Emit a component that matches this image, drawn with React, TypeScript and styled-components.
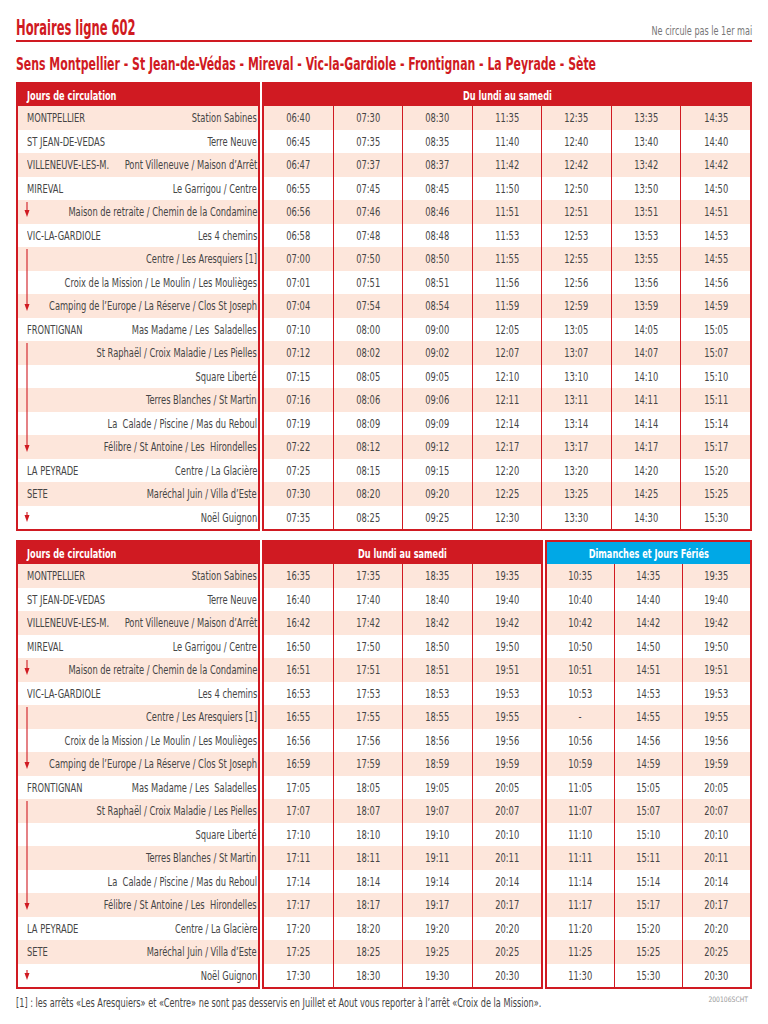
import React from "react";
import styled, { createGlobalStyle } from "styled-components";

const RED = "#d01a22";
const PINK = "#fde6db";
const BLUE = "#00a8e6";
const TEXT = "#454545";
const FONT = `"DejaVu Sans Condensed", "DejaVu Sans", "Liberation Sans", sans-serif`;

const Global = createGlobalStyle`
  html, body { margin: 0; padding: 0; background: #fff; }
  body { font-family: ${FONT}; font-stretch: condensed; color: ${TEXT}; }
`;

/* Condensed lettering: the page's face is a narrow condensed sans,
   so the installed condensed face is narrowed further horizontally. */
const Cond = styled.span<{ $o?: "left" | "right" | "center"; $k?: number }>`
  display: inline-block;
  white-space: nowrap;
  transform: scaleX(${(p) => p.$k ?? 0.74});
  transform-origin: ${(p) => p.$o ?? "left"} center;
`;

const Page = styled.div`
  width: 768px;
  box-sizing: border-box;
  padding: 0 16px;
  display: flex;
  flex-direction: column;
  overflow: hidden;
  & > * { flex: none; }
`;

const TitleRow = styled.header`
  height: 42px;
  box-sizing: border-box;
  display: flex;
  align-items: baseline;
  justify-content: space-between;
  border-bottom: 2px solid ${RED};
  padding-top: 16px;
`;

const Title = styled.h1`
  margin: 0;
  font-size: 21px;
  line-height: 24px;
  font-weight: 700;
  color: ${RED};
`;

const Note = styled.span`
  font-size: 12px;
  line-height: 12px;
  color: #777;
`;

const Subtitle = styled.h2`
  margin: 11px 0 0;
  font-size: 18px;
  line-height: 22px;
  font-weight: 700;
  color: ${RED};
  overflow: hidden;
`;

const Table = styled.section<{ $top: number }>`
  margin-top: ${(p) => p.$top}px;
  display: flex;
  gap: 2px;
`;

const Block = styled.div<{ $w: number }>`
  width: ${(p) => p.$w}px;
  flex: none;
  box-sizing: border-box;
  border: 2px solid ${RED};
  display: flex;
  flex-direction: column;
`;

const Head = styled.div<{ $blue?: boolean; $center?: boolean }>`
  height: 22px;
  display: flex;
  align-items: center;
  justify-content: ${(p) => (p.$center ? "center" : "flex-start")};
  padding: 0 9px;
  background: ${(p) => (p.$blue ? BLUE : RED)};
  color: #fff;
  font-weight: 700;
  font-size: 13px;
`;

const Row = styled.div<{ $odd: boolean }>`
  height: 23.5px;
  display: flex;
  align-items: center;
  background: ${(p) => (p.$odd ? PINK : "#fff")};
  font-size: 12.5px;
  white-space: nowrap;
`;

const Town = styled.span`
  position: relative;
  align-self: stretch;
  display: flex;
  align-items: center;
  padding-left: 9px;
  flex: none;
  min-width: 14px;
`;

const StopName = styled.span`
  flex: 1;
  min-width: 0;
  display: flex;
  justify-content: flex-end;
  padding-right: 1px;
`;

const Time = styled.span`
  flex: 1;
  align-self: stretch;
  display: flex;
  align-items: center;
  justify-content: center;
  & + & { border-left: 1px solid ${RED}; }
`;

const ArrowSvg = styled.svg`
  position: absolute;
  left: 5px;
  top: 0;
  width: 8px;
  height: 23.5px;
`;

type ArrowKind = "single" | "start" | "mid" | "end" | "short";

const Arrow = ({ kind }: { kind: ArrowKind }) => {
  const line: Record<ArrowKind, [number, number]> = {
    single: [2, 11],
    start: [2, 24],
    mid: [0, 24],
    end: [0, 11],
    short: [6, 10],
  };
  const [y1, y2] = line[kind];
  const hasHead = kind === "single" || kind === "end" || kind === "short";
  const hy = kind === "short" ? 9 : 10;
  return (
    <ArrowSvg viewBox="0 0 8 23.5">
      <line x1="4" y1={y1} x2="4" y2={y2} stroke={RED} strokeWidth="1.1" />
      {hasHead && <polygon points={`1.5,${hy} 6.5,${hy} 4,${hy + 7}`} fill={RED} />}
    </ArrowSvg>
  );
};

type StopInfo = { town?: string; stop: string; arrow?: ArrowKind; skip?: boolean };

const STOPS: StopInfo[] = [
  { town: "MONTPELLIER", stop: "Station Sabines" },
  { town: "ST JEAN-DE-VEDAS", stop: "Terre Neuve" },
  { town: "VILLENEUVE-LES-M.", stop: "Pont Villeneuve / Maison d\u2019Arrêt" },
  { town: "MIREVAL", stop: "Le Garrigou / Centre" },
  { arrow: "single", stop: "Maison de retraite / Chemin de la Condamine" },
  { town: "VIC-LA-GARDIOLE", stop: "Les 4 chemins" },
  { arrow: "start", stop: "Centre / Les Aresquiers [1]", skip: true },
  { arrow: "mid", stop: "Croix de la Mission / Le Moulin / Les Moulièges" },
  { arrow: "end", stop: "Camping de l\u2019Europe / La Réserve / Clos St Joseph" },
  { town: "FRONTIGNAN", stop: "Mas Madame / Les  Saladelles" },
  { arrow: "start", stop: "St Raphaël / Croix Maladie / Les Pielles" },
  { arrow: "mid", stop: "Square Liberté" },
  { arrow: "mid", stop: "Terres Blanches / St Martin" },
  { arrow: "mid", stop: "La  Calade / Piscine / Mas du Reboul" },
  { arrow: "end", stop: "Félibre / St Antoine / Les  Hirondelles" },
  { town: "LA PEYRADE", stop: "Centre / La Glacière" },
  { town: "SETE", stop: "Maréchal Juin / Villa d\u2019Este" },
  { arrow: "short", stop: "Noël Guignon" },
];

const OFFSETS = [0, 5, 7, 15, 16, 18, 20, 21, 24, 30, 32, 35, 36, 39, 42, 45, 50, 55];

const fmt = (base: string, off: number) => {
  const [h, m] = base.split(":").map(Number);
  const t = h * 60 + m + off;
  const hh = String(Math.floor(t / 60)).padStart(2, "0");
  const mm = String(t % 60).padStart(2, "0");
  return `${hh}:${mm}`;
};

const StopsBlock = () => (
  <Block $w={244}>
    <Head>
      <Cond $k={0.7}>Jours de circulation</Cond>
    </Head>
    {STOPS.map((s, i) => (
      <Row key={i} $odd={i % 2 === 0}>
        <Town>{s.arrow ? <Arrow kind={s.arrow} /> : <Cond>{s.town}</Cond>}</Town>
        <StopName>
          <Cond $o="right">{s.stop.replace(/  /g, "\u00a0 ")}</Cond>
        </StopName>
      </Row>
    ))}
  </Block>
);

const TimesBlock = ({
  w,
  label,
  bases,
  blue,
  holiday,
}: {
  w: number;
  label: string;
  bases: string[];
  blue?: boolean;
  holiday?: boolean;
}) => (
  <Block $w={w}>
    <Head $center $blue={blue}>
      <Cond $o="center" $k={0.7}>
        {label}
      </Cond>
    </Head>
    {OFFSETS.map((off, i) => (
      <Row key={i} $odd={i % 2 === 0}>
        {bases.map((b, j) => (
          <Time key={j}>
            <Cond $o="center">{holiday && j === 0 && STOPS[i].skip ? "-" : fmt(b, off)}</Cond>
          </Time>
        ))}
      </Row>
    ))}
  </Block>
);

const Footer = styled.footer`
  margin-top: 5px;
  display: flex;
  align-items: flex-start;
`;

const FootNote = styled.p`
  margin: 0;
  flex: 1;
  min-width: 0;
  overflow: hidden;
  font-size: 12.5px;
  line-height: 18px;
  color: ${TEXT};
`;

const Ref = styled.span`
  flex: none;
  font-size: 7.5px;
  line-height: 10px;
  margin-top: 1px;
  color: #999;
  padding-right: 4px;
`;

export default function App() {
  return (
    <Page>
      <Global />
      <TitleRow>
        <Title>
          <Cond $k={0.61}>Horaires ligne 602</Cond>
        </Title>
        <Note>
          <Cond $o="right" $k={0.75}>
            Ne circule pas le 1er mai
          </Cond>
        </Note>
      </TitleRow>
      <Subtitle>
        <Cond $k={0.674}>
          Sens Montpellier - St Jean-de-Védas - Mireval - Vic-la-Gardiole - Frontignan - La Peyrade - Sète
        </Cond>
      </Subtitle>
      <Table $top={7}>
        <StopsBlock />
        <TimesBlock w={490} label="Du lundi au samedi" bases={["06:40", "07:30", "08:30", "11:35", "12:35", "13:35", "14:35"]} />
      </Table>
      <Table $top={9}>
        <StopsBlock />
        <TimesBlock w={281} label="Du lundi au samedi" bases={["16:35", "17:35", "18:35", "19:35"]} />
        <TimesBlock w={207} label="Dimanches et Jours Fériés" bases={["10:35", "14:35", "19:35"]} blue holiday />
      </Table>
      <Footer>
        <FootNote>
          <Cond $k={0.726}>
            [1] : les arrêts «Les Aresquiers» et «Centre» ne sont pas desservis en Juillet et Aout vous reporter à l’arrêt «Croix de la Mission».
          </Cond>
        </FootNote>
        <Ref>
          <Cond $o="right" $k={0.9}>
            200106SCHT
          </Cond>
        </Ref>
      </Footer>
    </Page>
  );
}
